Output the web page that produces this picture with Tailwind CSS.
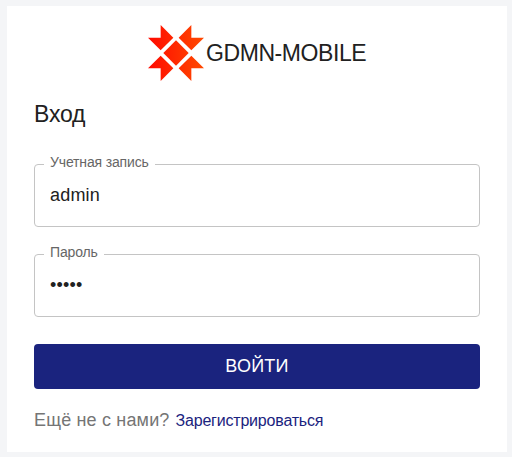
<!DOCTYPE html>
<html lang="ru"><head><meta charset="utf-8"><title>GDMN-MOBILE</title>
<script src="https://cdn.jsdelivr.net/npm/@tailwindcss/browser@4"></script></head>
<body class="bg-[#f4f5f7] font-['Liberation_Sans',Arial,sans-serif] text-[#212121] overflow-hidden">
<main class="ml-[7px] mt-[6px] w-[500px] h-[446px] bg-white px-[27px] pt-[18px]">
<header class="flex h-[58px] items-center justify-center gap-[1px]">
<svg class="size-[58px] shrink-0" viewBox="0 0 174 174"><defs><linearGradient id="g" gradientUnits="userSpaceOnUse" x1="0" y1="0" x2="174" y2="0"><stop stop-color="#ff0800"/><stop offset="1" stop-color="#ff4b00"/></linearGradient></defs>
<g fill="url(#g)"><path d="M87 49L125 87L87 125L49 87Z"/><path d="M41 3L79 41L41 79L3 41H41Z"/><path d="M133 3L95 41L133 79L171 41H133Z"/><path d="M41 171L79 133L41 95L3 133H41Z"/><path d="M133 171L95 133L133 95L171 133H133Z"/></g></svg>
<h1 class="w-[161px] text-[23px] leading-7 tracking-[-0.42px] whitespace-nowrap">GDMN-MOBILE</h1>
</header>
<h2 class="mt-[17px] text-[23px] leading-[30px] tracking-[-0.2px]">Вход</h2>
<form>
<fieldset class="mt-[26px] h-[72px] rounded-[4px] border border-[#c4c4c4] px-[9px]">
<legend class="h-[18px] px-[6px] text-[14px] leading-[14px] tracking-[-0.15px] text-[#666]">Учетная запись</legend>
<div class="pl-[6px] pt-[10px] text-[18px] leading-6 tracking-[0.2px]">admin</div></fieldset>
<fieldset class="mt-[18px] h-[72px] rounded-[4px] border border-[#c4c4c4] px-[9px]">
<legend class="h-[18px] px-[6px] text-[14px] leading-[14px] tracking-[-0.15px] text-[#666]">Пароль</legend>
<div class="pl-[6px] pt-[10px] text-[18px] leading-6 tracking-[0.2px]">•••••</div></fieldset>
<button type="button" class="mt-[27px] block h-[45px] w-full rounded-[4px] bg-[#1a237e] text-[18px] tracking-[0.2px] text-white">ВОЙТИ</button>
</form>
<p class="mt-[19px] flex items-baseline gap-[6px] whitespace-nowrap text-[18px] leading-6 text-[#757575]"><span class="tracking-[0.17px]">Ещё не с нами?</span><a class="text-[16px] tracking-[-0.2px] text-[#1a237e]">Зарегистрироваться</a></p>
</main></body></html>
